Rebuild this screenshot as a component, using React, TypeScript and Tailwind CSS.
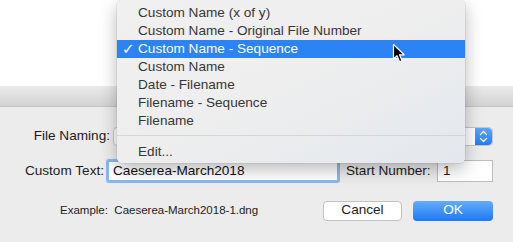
import React from 'react';

const menuItems = [
  'Custom Name (x of y)',
  'Custom Name - Original File Number',
  'Custom Name - Sequence',
  'Custom Name',
  'Date - Filename',
  'Filename - Sequence',
  'Filename',
];

const Cursor: React.FC = () => (
  <svg className="absolute left-[392px] top-[43px] w-[14px] h-[21px]" viewBox="0 0 14 21">
    <path
      d="M1.5 1.5 L1.5 16 L5 12.7 L7.6 18.8 L10 17.8 L7.5 11.8 L12.2 11.8 Z"
      fill="#000"
      stroke="#fff"
      strokeWidth="1.2"
      strokeLinejoin="round"
    />
  </svg>
);

const Stepper: React.FC = () => (
  <div className="w-[17px] h-full rounded-r-[4px] bg-gradient-to-b from-[#5ba6fa] to-[#1f7bf4] flex items-center justify-center">
    <svg className="w-[9px] h-[13px]" viewBox="0 0 9 13" fill="none" stroke="#fff" strokeWidth="1.3" strokeLinecap="round" strokeLinejoin="round">
      <path d="M1.5 4.5 L4.5 1.5 L7.5 4.5" />
      <path d="M1.5 8.5 L4.5 11.5 L7.5 8.5" />
    </svg>
  </div>
);

const PopupMenu: React.FC = () => (
  <div className="absolute left-[117px] top-0 w-[348px] h-[163px] rounded-[5px] bg-gradient-to-br from-[#f0f0f0] via-[#eeeeee] to-[#e3e8ee] shadow-[0_6px_18px_rgba(0,0,0,0.28),0_0_0_0.5px_rgba(0,0,0,0.12)] pt-[4px] text-[13.6px] text-[#363636]">
    {menuItems.map((item) => {
      const selected = item === 'Custom Name - Sequence';
      return (
        <div
          key={item}
          className={
            selected
              ? 'h-[18px] flex items-center bg-[#2b83f6] text-white'
              : 'h-[18px] flex items-center'
          }
        >
          <span className="w-[21px] pl-[5px] text-[15px] leading-none font-['DejaVu_Sans',sans-serif]">{selected ? '✓' : ''}</span>
          <span>{item}</span>
        </div>
      );
    })}
    <div className="h-[13px] pt-[5px]">
      <div className="w-full h-px bg-[#d6d6d6]" />
    </div>
    <div className="h-[18px] flex items-center pl-[21px]">Edit...</div>
  </div>
);

const App: React.FC = () => {
  return (
    <div className="relative w-[513px] h-[242px] overflow-hidden bg-white font-['Liberation_Sans',Arial,sans-serif] text-[13.6px] text-[#1c1c1c]">
      <div className="h-[86px]" />
      <div className="h-[156px] flex flex-col">
        <div className="h-[21px] bg-gradient-to-b from-[#ebebeb] to-[#d3d3d3] border-b border-[#c4c4c4]" />
        <div className="flex-1 bg-[#ececec] flex flex-col">
          <div className="flex items-center mt-[20px] h-[19px]">
            <span className="w-[110px] text-right">File Naming:</span>
            <div className="ml-[3px] w-[380px] h-[19px] flex bg-white border border-[#c6c6c6] rounded-[4px] justify-end">
              <Stepper />
            </div>
          </div>
          <div className="flex items-center mt-[13px] h-[24px]">
            <span className="w-[104px] text-right">Custom Text:</span>
            <div className="ml-[2px] w-[234px] h-[24px] rounded-[3px] border-[3px] border-[#8bb7f0] bg-white flex items-center pl-[4px] text-[#111]">
              Caeserea-March2018
            </div>
            <span className="ml-[6px] w-[85px]">Start Number:</span>
            <div className="ml-[6px] w-[56px] h-[22px] bg-white border border-[#bdbdbd] flex items-center pl-[5px]">1</div>
          </div>
          <div className="flex items-center mt-[17px] h-[21px]">
            <span className="ml-[60px] text-[11.5px] w-[263px]">Example:&nbsp; Caeserea-March2018-1.dng</span>
            <button className="w-[79px] h-[20px] bg-white border border-[#c2c2c2] rounded-[4px] text-[13.6px] text-[#1c1c1c] flex items-center justify-center">
              Cancel
            </button>
            <button className="ml-[11px] w-[80px] h-[20px] rounded-[4px] bg-gradient-to-b from-[#62acfa] to-[#1b78f4] text-white text-[13.6px] flex items-center justify-center">
              OK
            </button>
          </div>
        </div>
      </div>
      <PopupMenu />
      <Cursor />
    </div>
  );
};

export default App;
